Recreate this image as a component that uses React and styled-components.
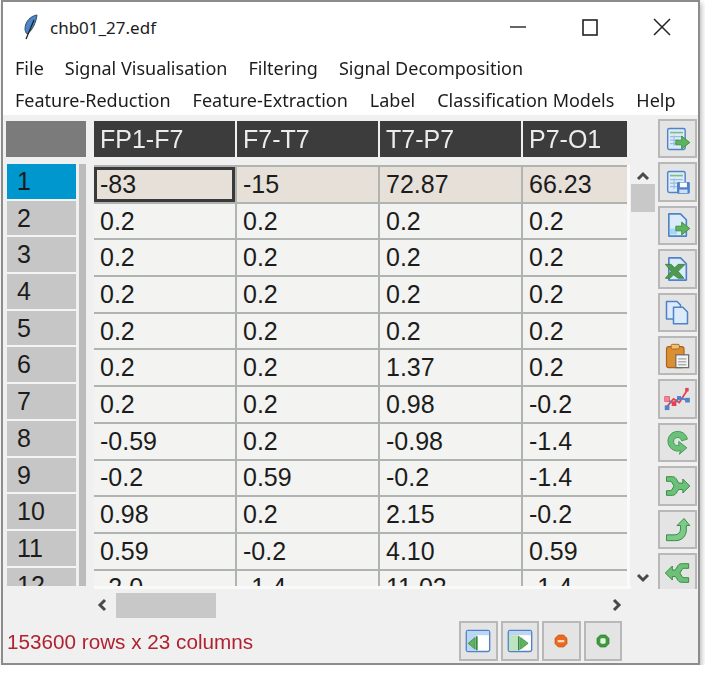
import React from 'react';
import styled, { createGlobalStyle } from 'styled-components';

const GlobalStyle = createGlobalStyle`
  html, body {
    margin: 0;
    padding: 0;
    background: #fff;
  }
`;

const COLUMNS = ['FP1-F7', 'F7-T7', 'T7-P7', 'P7-O1'];
const ROWS = [
  ['-83', '-15', '72.87', '66.23'],
  ['0.2', '0.2', '0.2', '0.2'],
  ['0.2', '0.2', '0.2', '0.2'],
  ['0.2', '0.2', '0.2', '0.2'],
  ['0.2', '0.2', '0.2', '0.2'],
  ['0.2', '0.2', '1.37', '0.2'],
  ['0.2', '0.2', '0.98', '-0.2'],
  ['-0.59', '0.2', '-0.98', '-1.4'],
  ['-0.2', '0.59', '-0.2', '-1.4'],
  ['0.98', '0.2', '2.15', '-0.2'],
  ['0.59', '-0.2', '4.10', '0.59'],
  ['-2.0', '-1.4', '11.02', '-1.4'],
];
const MENU_TOP = ['File', 'Signal Visualisation', 'Filtering', 'Signal Decomposition'];
const MENU_BOTTOM = ['Feature-Reduction', 'Feature-Extraction', 'Label', 'Classification Models', 'Help'];

const BLUE = '#4f82c8';
const PALE = '#dcebfa';
const GREEN = '#5fb35f';
const DARK_GREEN = '#2f8a3a';

const Sheet = () => (
  <>
    <rect x="4" y="3" width="15" height="18" rx="1.5" fill={PALE} stroke={BLUE} strokeWidth="1.2" />
    <path d="M6 6.5h11" stroke="#7cc07c" strokeWidth="1.4" />
    <path d="M6 10h11M6 13h7M6 16h7M9.5 9v9" stroke="#9dbbe0" strokeWidth="1" />
  </>
);
const Page = () => (
  <path d="M5 2.5h10l5 5v14H5z" fill={PALE} stroke={BLUE} strokeWidth="1.4" strokeLinejoin="round" />
);
const ArrowRight = () => (
  <path d="M11 13h5v-3.5l7 5.5-7 5.5V17h-5z" fill={GREEN} stroke={DARK_GREEN} strokeWidth="0.7" />
);

const ICONS = {
  tableExport: (
    <>
      <Sheet />
      <ArrowRight />
    </>
  ),
  tableSave: (
    <>
      <Sheet />
      <rect x="12" y="12" width="11" height="10" rx="1" fill={BLUE} />
      <rect x="14.5" y="12.5" width="6" height="4" fill="#fff" />
      <rect x="14" y="18.5" width="7" height="3" fill="#cfe0f5" />
    </>
  ),
  fileExport: (
    <>
      <Page />
      <path d="M6 15h6v5H6z" fill="#a5d8f5" />
      <ArrowRight />
    </>
  ),
  excel: (
    <>
      <Page />
      <path d="M2 8h5l3 3 3-3h6l-6 6 5 6h-5l-4-3-3 3H2l5-6z" fill="#4f9a4f" stroke="#2f7a3a" strokeWidth="0.6" />
    </>
  ),
  copy: (
    <>
      <path d="M3 3h9l3 3v12H3z" fill={PALE} stroke={BLUE} strokeWidth="1.3" strokeLinejoin="round" />
      <path d="M9 8h8l4 4v10H9z" fill={PALE} stroke={BLUE} strokeWidth="1.3" strokeLinejoin="round" />
    </>
  ),
  paste: (
    <>
      <rect x="3" y="4" width="15" height="18" rx="2" fill="#d98f32" stroke="#a8641c" strokeWidth="1" />
      <rect x="7" y="2" width="7" height="4" rx="1" fill="#f0c070" stroke="#a8641c" strokeWidth="0.8" />
      <rect x="11" y="11" width="11" height="11" fill="#f4f4f4" stroke="#666" strokeWidth="1" />
      <path d="M13 14.5h7M13 17h7M13 19.5h7" stroke="#888" strokeWidth="0.8" />
    </>
  ),
  chart: (
    <>
      <path d="M3 19L9 12l5 3 7-11" fill="none" stroke="#e8404f" strokeWidth="1.5" />
      <path d="M3 12l6 4 5-5 7 2" fill="none" stroke="#4f82c8" strokeWidth="1.5" />
      <rect x="1.5" y="10" width="4" height="4" fill="#f08a9a" stroke="#e8404f" strokeWidth="0.6" />
      <rect x="7.5" y="14" width="4" height="4" fill="#e8404f" />
      <rect x="1.5" y="17.5" width="4" height="4" fill={BLUE} />
      <rect x="12" y="9.5" width="3.5" height="3.5" fill={BLUE} />
      <rect x="19" y="11" width="4" height="4" fill={BLUE} />
      <rect x="19" y="2.5" width="3" height="3" fill="#e8404f" />
    </>
  ),
  rotate: (
    <path
      d="M15 19.5A8.5 8.5 0 1 1 21 9.5l-5 1.5a3.5 3.5 0 1 0-2.5 4v-3.5l7 5.5-6.5 5.5z"
      fill="#6cc07a"
      stroke="#3f9a4f"
      strokeWidth="0.8"
    />
  ),
  split: (
    <path
      d="M3 4h5c2 0 3 1 4 3l1.5 2.5H17V6l6 6-6 6v-3h-3.5L12 17c-1 2-2 3-4 3H3v-4h4l2.5-4L7 8H3z"
      fill="#6cc07a"
      stroke="#2f8a3a"
      strokeWidth="0.8"
    />
  ),
  turnUp: (
    <path
      d="M3 17h7c3 0 5-2 5-5V9h-3l6-6 5 6h-3v4c0 5-4 9-9 9H3z"
      fill="#7cc98a"
      stroke="#2f8a3a"
      strokeWidth="0.8"
    />
  ),
  merge: (
    <path
      d="M22 4h-6c-2 0-3 1-4 3l-1.5 2.5H8V6l-6 6 6 6v-3h2.5L12 17c1 2 2 3 4 3h6v-4h-5l-2.5-4L17 8h5z"
      fill="#6cc07a"
      stroke="#2f8a3a"
      strokeWidth="0.8"
    />
  ),
  collapse: (
    <>
      <rect x="2" y="3" width="20" height="18" rx="1.5" fill="#fff" stroke={BLUE} strokeWidth="1.2" />
      <path d="M2.5 3.5h19V7h-19zM2.5 7H11v13.5H2.5z" fill="#bcd6f2" />
      <path d="M11 8v12" stroke={DARK_GREEN} strokeWidth="1.4" />
      <path d="M3.5 14l6-5v10z" fill={GREEN} stroke={DARK_GREEN} strokeWidth="0.6" />
    </>
  ),
  expand: (
    <>
      <rect x="2" y="3" width="20" height="18" rx="1.5" fill="#fff" stroke={BLUE} strokeWidth="1.2" />
      <path d="M2.5 3.5h19V7h-19z" fill="#bcd6f2" />
      <path d="M2.5 7H11v13.5H2.5z" fill="#bfe3c0" />
      <path d="M11 8v12" stroke={DARK_GREEN} strokeWidth="1.4" />
      <path d="M19 14l-6.5-5v10z" fill={GREEN} stroke={DARK_GREEN} strokeWidth="0.6" />
    </>
  ),
  minus: (
    <>
      <path d="M8 3h8l5 5v8l-5 5H8l-5-5V8z" fill="#e8691f" stroke="#c94f10" strokeWidth="1" />
      <rect x="7" y="10.5" width="10" height="3.5" fill="#fbd9c0" />
    </>
  ),
  plus: (
    <>
      <path d="M8 3h8l5 5v8l-5 5H8l-5-5V8z" fill="#3f9a3f" stroke="#2a7a2a" strokeWidth="1" />
      <rect x="8" y="8" width="8" height="8" rx="2" fill="#e4f5e0" />
    </>
  ),
};

const TOOLBAR = ['tableExport', 'tableSave', 'fileExport', 'excel', 'copy', 'paste', 'chart', 'rotate', 'split', 'turnUp', 'merge'];
const PAGER = ['collapse', 'expand', 'minus', 'plus'];

const ToolIcon = ({ name, small }) => (
  <svg width={small ? 16 : 28} height={small ? 16 : 28} viewBox="0 0 24 24">
    {ICONS[name]}
  </svg>
);

const Chevron = ({ d }) => (
  <svg width="14" height="14" viewBox="0 0 14 14">
    <path d={d} fill="none" stroke="#4a4a4a" strokeWidth="3" />
  </svg>
);

function App() {
  return (
    <Window>
      <GlobalStyle />
      <TitleBar>
        <svg width="16" height="27" viewBox="0 0 16 27">
          <path d="M15 1C8 2 3 8 3 15c0 2 1 4 2 5 5-3 9-11 10-19z" fill="#4a86c8" stroke="#33506e" strokeWidth="1" />
          <path d="M12 6L4 25" stroke="#222" strokeWidth="1.3" />
        </svg>
        <Title>chb01_27.edf</Title>
        <WindowControl>
          <svg width="16" height="16" viewBox="0 0 16 16">
            <path d="M0 8h16" stroke="#333" strokeWidth="1.5" />
          </svg>
        </WindowControl>
        <WindowControl>
          <svg width="16" height="17" viewBox="0 0 16 17">
            <rect x="1" y="1" width="14" height="15" fill="none" stroke="#222" strokeWidth="1.6" />
          </svg>
        </WindowControl>
        <WindowControl>
          <svg width="18" height="18" viewBox="0 0 18 18">
            <path d="M1 1l16 16M17 1L1 17" stroke="#222" strokeWidth="1.5" />
          </svg>
        </WindowControl>
      </TitleBar>

      <MenuBar>
        <MenuRow $gap={21}>
          {MENU_TOP.map((item) => <MenuItem key={item}>{item}</MenuItem>)}
        </MenuRow>
        <MenuRow $gap={22}>
          {MENU_BOTTOM.map((item) => <MenuItem key={item}>{item}</MenuItem>)}
        </MenuRow>
      </MenuBar>

      <Content>
        <Main>
          <HeadRow>
            <Corner />
            {COLUMNS.map((col) => <HeadCell key={col}>{col}</HeadCell>)}
          </HeadRow>

          <SheetArea>
            <RowIndex>
              {ROWS.map((row, i) => (
                <IndexCell key={i} $active={i === 0}>{i + 1}</IndexCell>
              ))}
            </RowIndex>
            <Gutter />
            <TableClip>
              <Table>
                {ROWS.map((row, r) => (
                  <Row key={r}>
                    {row.map((value, c) => (
                      <Cell key={c} $active={r === 0} $focused={r === 0 && c === 0}>{value}</Cell>
                    ))}
                  </Row>
                ))}
              </Table>
            </TableClip>
            <VScroll>
              <Chevron d="M2 10l5-5 5 5" />
              <VThumb />
              <Space />
              <Chevron d="M2 3l5 5 5-5" />
            </VScroll>
          </SheetArea>

          <HScroll>
            <Chevron d="M10 2L5 7l5 5" />
            <HThumb />
            <Space />
            <Chevron d="M4 2l5 5-5 5" />
          </HScroll>

          <StatusBar>
            <StatusText>153600 rows x 23 columns</StatusText>
            <Pager>
              {PAGER.map((name) => (
                <ToolButton key={name}>
                  <ToolIcon name={name} small={name === 'minus' || name === 'plus'} />
                </ToolButton>
              ))}
            </Pager>
          </StatusBar>
        </Main>

        <Toolbar>
          {TOOLBAR.map((name) => (
            <ToolButton key={name}>
              <ToolIcon name={name} />
            </ToolButton>
          ))}
        </Toolbar>
      </Content>
    </Window>
  );
}

export default App;

const Window = styled.div`
  box-sizing: border-box;
  display: flex;
  flex-direction: column;
  width: 699px;
  height: 665px;
  margin-left: 1px;
  border: 2px solid #8c8c8c;
  background: #f0f0f0;
  box-shadow: 2px 3px 5px rgba(0, 0, 0, 0.25);
  overflow: hidden;
  filter: blur(0.4px);
`;

const TitleBar = styled.div`
  display: flex;
  align-items: center;
  flex: none;
  height: 50px;
  padding-left: 19px;
  background: #fff;
`;

const Title = styled.div`
  flex: 1;
  margin-left: 12px;
  font: 17px "Noto Sans", sans-serif;
  color: #1c1c1c;
`;

const WindowControl = styled.div`
  display: flex;
  align-items: center;
  justify-content: center;
  width: 72px;
`;

const MenuBar = styled.div`
  flex: none;
  height: 63px;
  padding-left: 12px;
  background: #fff;
`;

const MenuRow = styled.div`
  display: flex;
  gap: ${(props) => props.$gap}px;
  height: 32px;
  align-items: center;
`;

const MenuItem = styled.div`
  font: 18px "Noto Sans", sans-serif;
  color: #1c1c1c;
  white-space: nowrap;
`;

const Content = styled.div`
  display: flex;
  flex: 1;
  min-height: 0;
  padding: 4px 0 0 3px;
`;

const Main = styled.div`
  display: flex;
  flex-direction: column;
  width: 652px;
`;

const HeadRow = styled.div`
  display: flex;
  flex: none;
  gap: 2px;
  height: 36px;
  margin-top: 2px;
`;

const Corner = styled.div`
  width: 80px;
  margin-right: 6px;
  background: #7b7b7b;
`;

const HeadCell = styled.div`
  flex: none;
  box-sizing: border-box;
  width: 141px;
  padding-left: 6px;
  background: #3c3c3c;
  color: #ececec;
  font: 25px/36px "Liberation Sans", sans-serif;

  &:last-child {
    width: 104px;
  }
`;

const SheetArea = styled.div`
  display: flex;
  flex: none;
  height: 422px;
  margin-top: 7px;
`;

const RowIndex = styled.div`
  flex: none;
  width: 69px;
  margin-left: 1px;
  overflow: hidden;
`;

const IndexCell = styled.div`
  box-sizing: border-box;
  height: 36.7px;
  padding-left: 10px;
  border-bottom: 2px solid #f4f4f4;
  background: ${(props) => (props.$active ? '#0097cf' : '#c6c6c6')};
  color: #1c1c1c;
  font: 25px/34px "Liberation Sans", sans-serif;
`;

const Gutter = styled.div`
  flex: none;
  width: 7px;
  margin: 0 8px 0 3px;
  background: #bcbcbc;
`;

const TableClip = styled.div`
  flex: none;
  width: 533px;
  margin-top: 1px;
  border-right: 3px solid #fafafa;
  overflow: hidden;
`;

const Table = styled.div`
  display: grid;
  row-gap: 2px;
  width: 570px;
  padding-top: 2px;
  background: #b0b4b0;
`;

const Row = styled.div`
  display: grid;
  grid-template-columns: repeat(4, 141px);
  grid-template-rows: 34.7px;
  column-gap: 2px;
  height: 34.7px;
`;

const Cell = styled.div`
  display: flex;
  align-items: center;
  box-sizing: border-box;
  min-height: 0;
  padding-left: ${(props) => (props.$focused ? '3px' : '6px')};
  border: ${(props) => (props.$focused ? '3px solid #3a3a3a' : 'none')};
  background: ${(props) => (props.$active ? '#e6e0d8' : '#f3f3f1')};
  color: #1c1c1c;
  font: 25px "Liberation Sans", sans-serif;
`;

const VScroll = styled.div`
  display: flex;
  flex: none;
  flex-direction: column;
  align-items: center;
  width: 26px;
  padding-top: 5px;
`;

const VThumb = styled.div`
  flex: none;
  width: 24px;
  height: 28px;
  margin-top: 1px;
  background: #c8c8c8;
`;

const Space = styled.div`
  flex: 1;
`;

const HScroll = styled.div`
  display: flex;
  flex: none;
  align-items: center;
  box-sizing: border-box;
  width: 537px;
  height: 35px;
  margin-left: 88px;
  padding: 0 7px 0 1px;
  border-top: 3px solid #fafafa;
`;

const HThumb = styled.div`
  flex: none;
  width: 100px;
  height: 25px;
  margin-left: 7px;
  background: #c8c8c8;
`;

const StatusBar = styled.div`
  display: flex;
  align-items: center;
  justify-content: space-between;
  flex: none;
  height: 40px;
  padding-right: 36px;
`;

const StatusText = styled.div`
  padding: 2px 0 0 1px;
  color: #b0222f;
  font: 20.7px "Liberation Sans", sans-serif;
`;

const Pager = styled.div`
  display: flex;
  gap: 3px;
`;

const Toolbar = styled.div`
  display: flex;
  flex: none;
  flex-direction: column;
  gap: 4px;
  height: 470px;
  overflow: hidden;
`;

const ToolButton = styled.div`
  display: flex;
  flex: none;
  align-items: center;
  justify-content: center;
  box-sizing: border-box;
  width: 38.5px;
  height: 39.4px;
  border: 2px solid #b8b8b8;
  background: #e4e4e4;
`;
